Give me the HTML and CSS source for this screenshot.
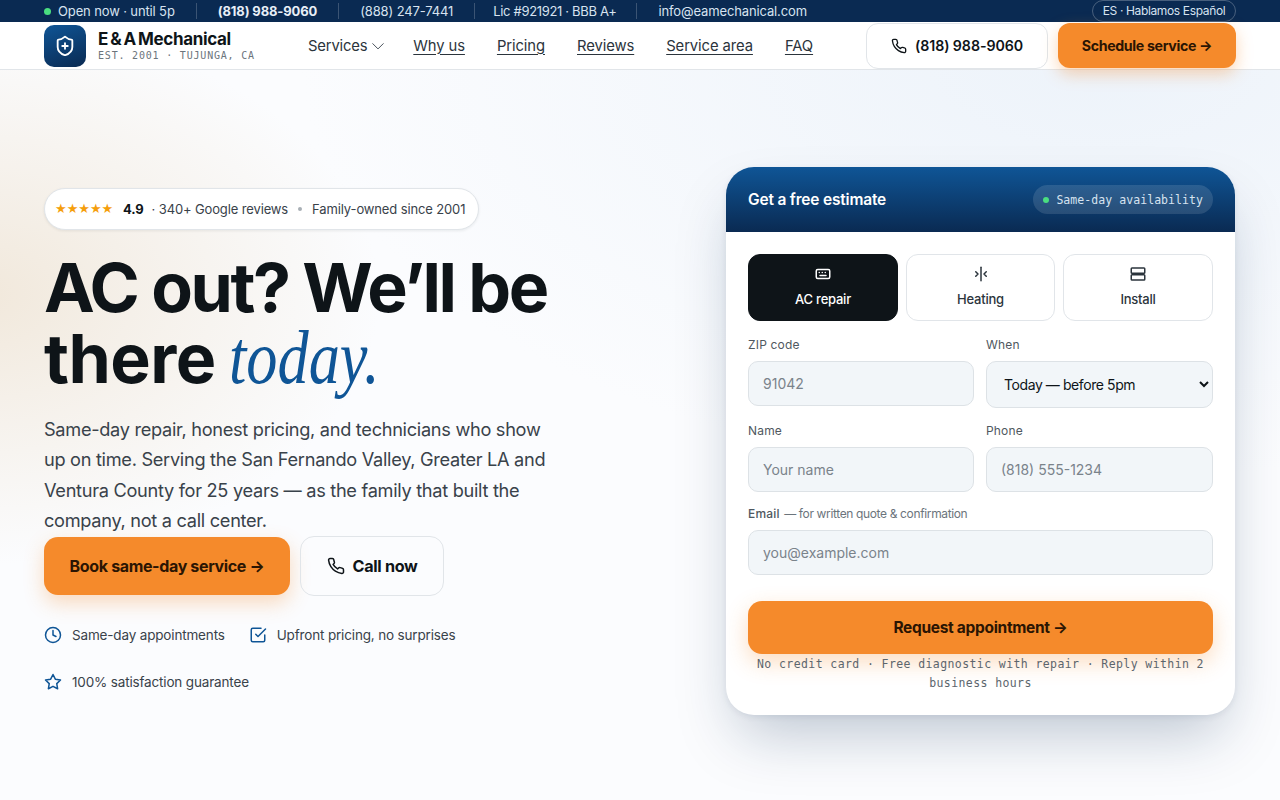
FILE: index.html
```html
<!DOCTYPE html>
<html lang="en">
<head>
<meta charset="utf-8">
<title>E &amp; A Mechanical</title>
<link rel="stylesheet" href="styles.css">
</head>
<body>
<div class="topbar">
  <div class="top-left">
    <span class="top-item first"><i class="dot"></i>Open now · until 5p</span>
    <span class="top-item strong">(818) 988-9060</span>
    <span class="top-item">(888) 247-7441</span>
    <span class="top-item tight">Lic #921921 · BBB A+</span>
    <span class="top-item">info@eamechanical.com</span>
  </div>
  <span class="lang">ES · Hablamos Español</span>
</div>
<header class="nav">
  <div class="brand">
    <div class="logo">
      <svg width="22" height="22" viewBox="0 0 24 24" fill="none" stroke="#fff" stroke-width="2" stroke-linecap="round" stroke-linejoin="round"><path d="M20 13c0 5-3.5 7.5-7.66 8.95a1 1 0 0 1-.67-.01C7.5 20.5 4 18 4 13V6a1 1 0 0 1 1-1c2 0 4.5-1.2 6.24-2.72a1.17 1.17 0 0 1 1.52 0C14.51 3.81 17 5 19 5a1 1 0 0 1 1 1z"/><path d="M9 12h6"/><path d="M12 9v6"/></svg>
    </div>
    <div class="brand-text">
      <div class="brand-name">E &amp; A Mechanical</div>
      <div class="brand-sub">EST. 2001 · TUJUNGA, CA</div>
    </div>
  </div>
  <nav class="links">
    <a class="plain">Services <svg width="14" height="14" viewBox="0 0 24 24" fill="none" stroke="#3c4650" stroke-width="1.6" stroke-linecap="round" stroke-linejoin="round"><path d="m3 8 9 9 9-9"/></svg></a>
    <a>Why us</a>
    <a>Pricing</a>
    <a>Reviews</a>
    <a>Service area</a>
    <a>FAQ</a>
  </nav>
  <div class="nav-actions">
    <a class="nav-call">
      <svg width="16" height="16" viewBox="0 0 24 24" fill="none" stroke="#0e1418" stroke-width="2" stroke-linecap="round" stroke-linejoin="round"><path d="M22 16.92v3a2 2 0 0 1-2.18 2 19.79 19.79 0 0 1-8.63-3.07 19.5 19.5 0 0 1-6-6 19.79 19.79 0 0 1-3.07-8.67A2 2 0 0 1 4.11 2h3a2 2 0 0 1 2 1.72 12.84 12.84 0 0 0 .7 2.81 2 2 0 0 1-.45 2.11L8.09 9.91a16 16 0 0 0 6 6l1.27-1.27a2 2 0 0 1 2.11-.45 12.84 12.84 0 0 0 2.81.7A2 2 0 0 1 22 16.92z"/></svg>
      (818) 988-9060
    </a>
    <a class="nav-cta">Schedule service →</a>
  </div>
</header>
<main class="hero">
  <section class="left">
    <div class="pill">
      <span class="stars">★★★★★</span>
      <b>4.9</b>
      <span class="pill-reviews">· 340+ Google reviews</span>
      <i class="pill-dot"></i>
      <span>Family-owned since 2001</span>
    </div>
    <h1>AC out? We’ll be <span class="there">there</span> <em>today.</em></h1>
    <p class="lead">Same-day repair, honest pricing, and technicians who show up on time. Serving the San Fernando Valley, Greater LA and Ventura County for 25 years — as the family that built the company, not a call center.</p>
    <div class="cta-row">
      <a class="btn-primary">Book same-day service →</a>
      <a class="btn-ghost">
        <svg width="18" height="18" viewBox="0 0 24 24" fill="none" stroke="#0e1418" stroke-width="2" stroke-linecap="round" stroke-linejoin="round"><path d="M22 16.92v3a2 2 0 0 1-2.18 2 19.79 19.79 0 0 1-8.63-3.07 19.5 19.5 0 0 1-6-6 19.79 19.79 0 0 1-3.07-8.67A2 2 0 0 1 4.11 2h3a2 2 0 0 1 2 1.72 12.84 12.84 0 0 0 .7 2.81 2 2 0 0 1-.45 2.11L8.09 9.91a16 16 0 0 0 6 6l1.27-1.27a2 2 0 0 1 2.11-.45 12.84 12.84 0 0 0 2.81.7A2 2 0 0 1 22 16.92z"/></svg>
        Call now
      </a>
    </div>
    <ul class="features">
      <li><svg width="18" height="18" viewBox="0 0 24 24" fill="none" stroke="#0f5596" stroke-width="2" stroke-linecap="round" stroke-linejoin="round"><circle cx="12" cy="12" r="10"/><path d="M12 6v6l4 2"/></svg>Same-day appointments</li>
      <li><svg width="18" height="18" viewBox="0 0 24 24" fill="none" stroke="#0f5596" stroke-width="2" stroke-linecap="round" stroke-linejoin="round"><path d="m9 11 3 3L22 4"/><path d="M21 12v7a2 2 0 0 1-2 2H5a2 2 0 0 1-2-2V5a2 2 0 0 1 2-2h11"/></svg>Upfront pricing, no surprises</li>
      <li><svg width="18" height="18" viewBox="0 0 24 24" fill="none" stroke="#0f5596" stroke-width="2" stroke-linecap="round" stroke-linejoin="round"><path d="M12 2l3.09 6.26L22 9.27l-5 4.87 1.18 6.88L12 17.77l-6.18 3.25L7 14.14 2 9.27l6.91-1.01z"/></svg>100% satisfaction guarantee</li>
    </ul>
  </section>
  <section class="card">
    <div class="card-head">
      <h2>Get a free estimate</h2>
      <span class="avail"><i class="dot"></i>Same-day availability</span>
    </div>
    <form class="card-body">
      <div class="segs">
        <button type="button" class="seg active">
          <svg width="18" height="18" viewBox="0 0 24 24" fill="none" stroke="currentColor" stroke-width="2" stroke-linecap="round" stroke-linejoin="round"><rect x="3" y="6" width="18" height="12" rx="2"/><path d="M7 10h.01M11 10h.01M15 10h.01M8 14h8"/></svg>
          AC repair
        </button>
        <button type="button" class="seg">
          <svg width="18" height="18" viewBox="0 0 24 24" fill="none" stroke="currentColor" stroke-width="2" stroke-linecap="round" stroke-linejoin="round"><path d="M12 3v18"/><path d="m5 9 3 3-3 3"/><path d="m19 9-3 3 3 3"/></svg>
          Heating
        </button>
        <button type="button" class="seg">
          <svg width="18" height="18" viewBox="0 0 24 24" fill="none" stroke="currentColor" stroke-width="2" stroke-linecap="round" stroke-linejoin="round"><rect x="3" y="4" width="18" height="7" rx="1"/><rect x="3" y="13" width="18" height="7" rx="1"/></svg>
          Install
        </button>
      </div>
      <div class="grid">
        <label class="field"><span class="lab">ZIP code</span><input placeholder="91042"></label>
        <label class="field"><span class="lab">When</span><select><option>Today — before 5pm</option></select></label>
        <label class="field"><span class="lab">Name</span><input placeholder="Your name"></label>
        <label class="field"><span class="lab">Phone</span><input placeholder="(818) 555-1234"></label>
        <label class="field wide"><span class="lab"><b>Email</b> <small>— for written quote &amp; confirmation</small></span><input placeholder="you@example.com"></label>
      </div>
      <button type="button" class="submit">Request appointment →</button>
      <p class="note">No credit card · Free diagnostic with repair · Reply within 2 business hours</p>
    </form>
  </section>
</main>
</body>
</html>
```
FILE: styles.css
```css
* { box-sizing: border-box; }
html, body { margin: 0; height: 100%; }
body {
  font-family: Inter, "Noto Sans", sans-serif;
  color: #0e1418;
  overflow: hidden;
  background:
    radial-gradient(400px 270px at -20px 295px, #f1e8db 0%, rgba(241,232,219,.5) 48%, rgba(241,232,219,0) 100%),
    radial-gradient(800px 420px at 1100px 60px, #edf3fa 0%, rgba(237,243,250,0) 100%),
    #fbfcfe;
}
a { color: inherit; text-decoration: none; }

.topbar {
  height: 22px;
  background: #0a2a52;
  color: #d7e3f0;
  display: flex;
  align-items: center;
  justify-content: space-between;
  padding: 0 44px;
  font-size: 13px;
  letter-spacing: -0.01em;
}
.top-left { display: flex; align-items: center; }
.top-item { padding: 0 21px; border-left: 1px solid rgba(255,255,255,.2); line-height: 16px; white-space: nowrap; }
.top-item.first { padding-left: 0; border-left: 0; display: flex; align-items: center; gap: 7px; }
.top-item.strong { font-weight: 700; color: #e8eff7; }
.top-item.tight { letter-spacing: -0.025em; padding-left: 18px; padding-right: 20px; }
.dot { width: 7px; height: 7px; border-radius: 50%; background: #4ade80; display: inline-block; flex: none; }
.lang {
  border: 1px solid rgba(255,255,255,.25);
  border-radius: 999px;
  font-size: 12px;
  line-height: 20px;
  height: 22px;
  width: 144px;
  flex: none;
  text-align: center;
  letter-spacing: -0.03em;
  white-space: nowrap;
}

.nav {
  height: 48px;
  background: #fff;
  border-bottom: 1px solid #e1e5e9;
  display: flex;
  align-items: center;
  padding: 0 44px;
}
.brand { display: flex; align-items: center; gap: 12px; width: 264px; flex: none; }
.logo {
  width: 42px; height: 42px; border-radius: 10px;
  background: linear-gradient(160deg, #0f5596, #0a2a52);
  display: flex; align-items: center; justify-content: center;
  flex: none;
}
.brand-name { font-size: 17px; font-weight: 700; letter-spacing: -0.02em; word-spacing: -1.5px; line-height: 20px; }
.brand-sub { font-family: "DejaVu Sans Mono", monospace; font-size: 10px; letter-spacing: 0.08em; color: #6b747c; line-height: 13px; }
.links { display: flex; align-items: center; gap: 32px; font-size: 14.8px; color: #2b343c; flex: 1; letter-spacing: -0.006em; }
.links a { text-decoration: underline; text-underline-offset: 3px; text-decoration-thickness: 1px; white-space: nowrap; }
.links a.plain { text-decoration: none; display: flex; align-items: center; gap: 4px; margin-right: -4px; letter-spacing: -0.012em; }
.nav-actions { display: flex; gap: 10px; align-items: center; }
.nav-call {
  width: 182px; height: 46px;
  background: #fff;
  border: 1px solid #e1e5e9;
  border-radius: 12px;
  display: flex; align-items: center; justify-content: center; gap: 8px;
  font-size: 14.2px; font-weight: 600; letter-spacing: -0.005em;
}
.nav-cta {
  width: 178px; height: 45px;
  background: #f58a2b;
  border-radius: 12px;
  display: flex; align-items: center; justify-content: center;
  font-size: 14.2px; font-weight: 700; letter-spacing: -0.025em;
  color: #2b1503;
  box-shadow: 0 6px 16px rgba(245,138,43,.35);
}

.hero {
  display: grid;
  grid-template-columns: 1fr 509px;
  align-items: center;
  padding: 97px 45px 0 44px;
}
.left { min-width: 0; padding-bottom: 2px; }
.pill {
  display: inline-flex; align-items: center;
  height: 42px;
  padding: 0 13px 0 10px;
  background: #fff;
  border: 1px solid #e1e5e9;
  border-radius: 999px;
  box-shadow: 0 1px 3px rgba(14,20,24,.08);
  font-size: 13px;
  color: #39424a;
  letter-spacing: -0.01em;
}
.stars { color: #f59e0b; font-size: 13px; letter-spacing: 0; width: 58px; white-space: nowrap; font-family: "DejaVu Sans", sans-serif; }
.pill b { color: #0e1418; margin: 0 8px 0 10px; font-weight: 700; }
.pill-dot { width: 4px; height: 4px; border-radius: 50%; background: #a8afb5; margin: 0 10px; }
h1 {
  margin: 22px 0 20px;
  font-size: 68px;
  line-height: 71px;
  font-weight: 700;
  letter-spacing: -0.035em;
  max-width: 520px;
}
.there { letter-spacing: -0.008em; }
h1 em {
  display: inline-block;
  font-family: "Liberation Serif", serif;
  font-style: italic;
  font-weight: 400;
  color: #0f5596;
  font-size: 76px;
  line-height: 0.8;
  letter-spacing: 0;
  transform: scaleX(.82);
  transform-origin: left;
  width: 148px;
  white-space: nowrap;
}
.lead {
  margin: 0;
  font-size: 18.2px;
  line-height: 30.4px;
  color: #39424a;
  max-width: 505px;
  letter-spacing: -0.3px;
}
.cta-row { display: flex; align-items: center; gap: 10px; margin-top: 1px; }
.btn-primary {
  width: 246px; height: 58px;
  background: #f58a2b;
  border-radius: 14px;
  display: flex; align-items: center; justify-content: center;
  font-size: 16px; font-weight: 700; letter-spacing: -0.022em;
  color: #2b1503;
  box-shadow: 0 8px 20px rgba(245,138,43,.3);
}
.btn-ghost {
  width: 144px; height: 60px;
  border: 1px solid #e1e5e9;
  border-radius: 14px;
  display: flex; align-items: center; justify-content: center; gap: 8px;
  font-size: 16.2px; font-weight: 700; letter-spacing: -0.02em;
}
.features {
  list-style: none;
  margin: 29px 0 0;
  padding: 0;
  display: flex; flex-wrap: wrap;
  column-gap: 24px; row-gap: 27px;
  max-width: 430px;
  font-size: 13.5px;
  line-height: 20px;
  color: #39424a;
  letter-spacing: -0.012em;
}
.features li { display: flex; align-items: center; gap: 10px; }

.card {
  background: #fff;
  border-radius: 28px;
  box-shadow: 0 30px 60px -12px rgba(10,42,82,.26), 0 2px 6px rgba(10,42,82,.08);
  overflow: hidden;
}
.card-head {
  height: 65px;
  background: linear-gradient(180deg, #0f5596, #0a2a52);
  display: flex; align-items: center; justify-content: space-between;
  padding: 0 22px;
  color: #fff;
}
.card-head h2 { margin: 0; font-size: 15.5px; font-weight: 600; letter-spacing: -0.012em; }
.avail {
  height: 29px;
  border-radius: 999px;
  background: rgba(255,255,255,.12);
  display: flex; align-items: center; gap: 7px;
  padding: 0 10px;
  font-family: "DejaVu Sans Mono", monospace;
  font-size: 11.5px;
  letter-spacing: 0.005em;
  color: #d7e3f0;
}
.avail .dot { width: 6px; height: 6px; }
.card-body { padding: 22px 22px 22px; display: block; }
.segs { display: grid; grid-template-columns: 150px 149px 150px; gap: 8px; }
.seg {
  height: 67px;
  background: #fff;
  border: 1px solid #e1e5e9;
  border-radius: 12px;
  color: #2b343c;
  font: 500 13px Inter, sans-serif;
  letter-spacing: -0.018em;
  display: flex; flex-direction: column; align-items: center; gap: 8px;
  padding: 10px 0 0;
}
.seg.active { background: #0e1418; border-color: #0e1418; color: #fff; }
.grid { display: grid; grid-template-columns: 226px 227px; column-gap: 12px; margin-top: 16px; row-gap: 15px; }
.field { display: flex; flex-direction: column; gap: 8px; }
.field.wide { grid-column: 1 / -1; margin-top: -1px; }
.lab { font-size: 12px; line-height: 16px; color: #4f5860; font-weight: 400; letter-spacing: 0.015em; }
.lab b { font-weight: 500; }
.lab small { font-size: 12px; color: #6b747c; font-weight: 400; letter-spacing: -0.03em; margin-left: 1px; }
input, select {
  height: 45px;
  width: 100%;
  background: #f2f6f9;
  border: 1px solid #dde2e6;
  border-radius: 10px;
  padding: 0 14px;
  font: 400 14px Inter, sans-serif;
  color: #0e1418;
}
select { height: 47px; letter-spacing: -0.03em; padding: 0 13px; }
input::placeholder { color: #7a838b; opacity: 1; }
.submit {
  display: block;
  width: 100%;
  height: 53px;
  margin-top: 26px;
  background: #f58a2b;
  border: 0;
  border-radius: 14px;
  font: 700 15.5px Inter, sans-serif;
  letter-spacing: -0.02em;
  color: #2b1503;
  box-shadow: 0 8px 22px rgba(245,138,43,.3);
}
.note {
  margin: 0;
  padding-top: 1px;
  text-align: center;
  font-family: "DejaVu Sans Mono", monospace;
  font-size: 11.5px;
  line-height: 19px;
  letter-spacing: 0.035em;
  color: #5c656d;
}
```
